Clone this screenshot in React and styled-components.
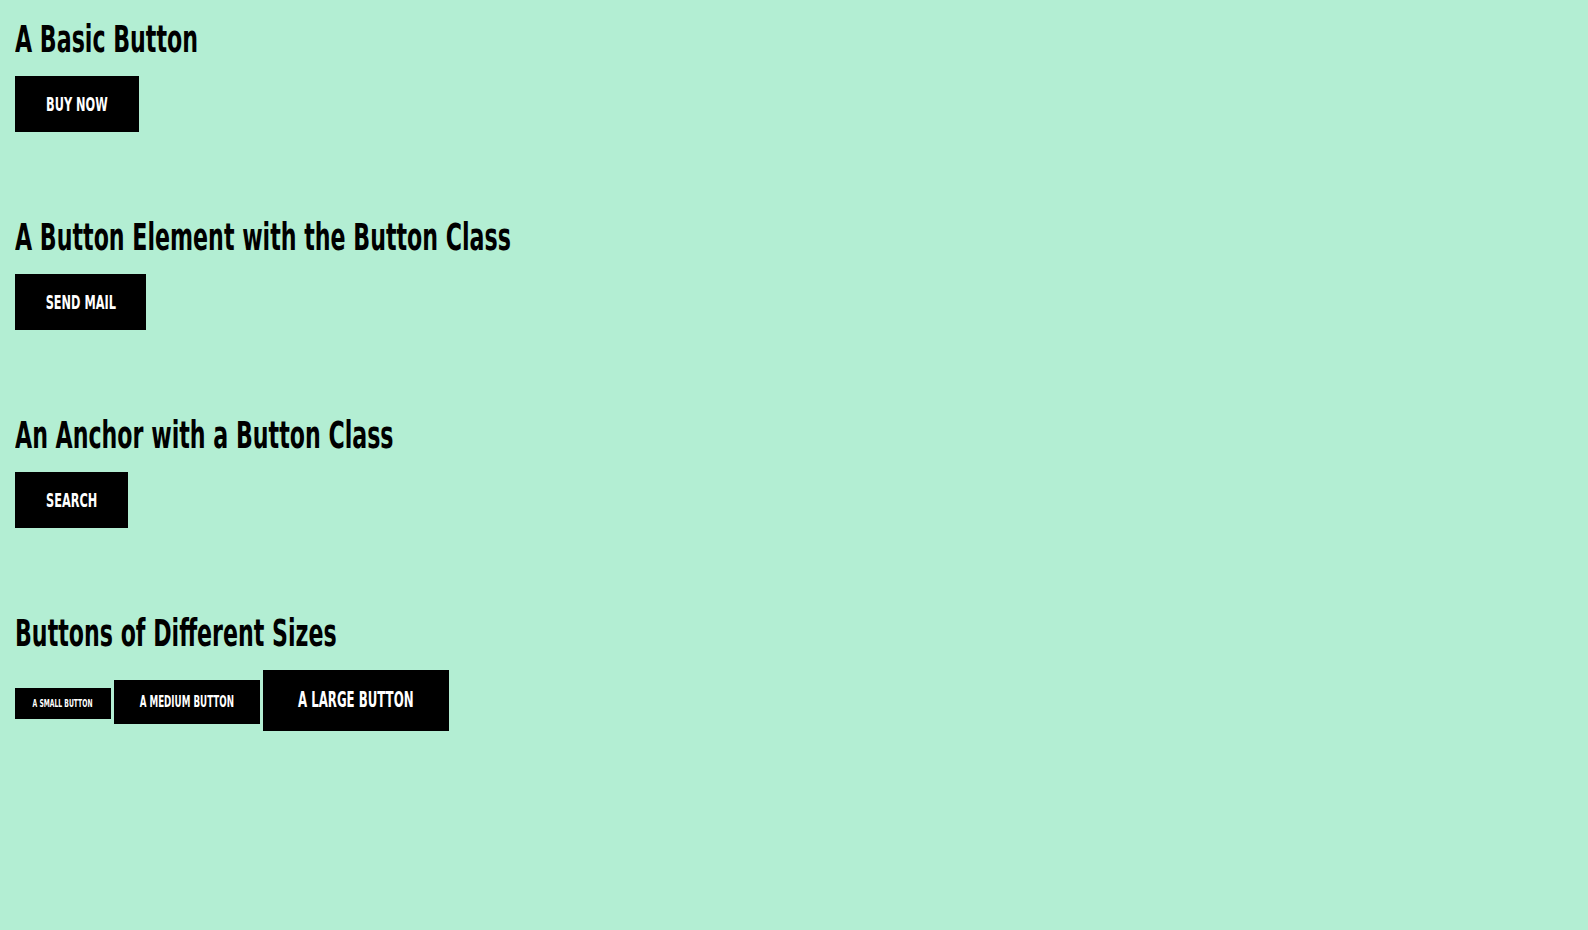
import React from 'react';
import styled, { createGlobalStyle } from 'styled-components';

const GlobalStyle = createGlobalStyle`
  html, body {
    margin: 0;
    padding: 0;
    background-color: #b3eed3;
  }
  body {
    font-family: 'DejaVu Sans Condensed', 'Liberation Sans', sans-serif;
  }
`;

const Page = styled.main`
  display: flex;
  flex-direction: column;
  gap: 86px;
  padding: 20px 15px 0;
  min-height: 930px;
  box-sizing: border-box;
`;

const Section = styled.section`
  display: flex;
  flex-direction: column;
  align-items: flex-start;
  gap: 16px;
`;

const Heading = styled.h2`
  margin: 0;
  font-size: 37px;
  line-height: 40px;
  font-weight: 700;
  color: #000;
  white-space: nowrap;
`;

// condensed face, the reference uses a tall narrow display font
const Narrow = styled.span`
  display: inline-block;
  transform: scaleX(${(p) => p.$k || 0.665});
  transform-origin: ${(p) => (p.$center ? 'center' : 'left')} center;
`;

const sizes = {
  regular: { font: 20, py: 18, lh: 20 },
  small: { font: 10.7, py: 10, lh: 11 },
  medium: { font: 15.4, py: 14, lh: 16 },
  large: { font: 20.8, py: 20, lh: 21 },
};

const Button = styled.button`
  display: inline-flex;
  justify-content: center;
  align-items: baseline;
  box-sizing: border-box;
  width: ${(p) => p.$width}px;
  border: none;
  margin: 0;
  cursor: pointer;
  background-color: #000;
  color: #fff;
  font-family: inherit;
  font-weight: 700;
  white-space: nowrap;
  text-transform: uppercase;
  text-decoration: none;
  font-size: ${(p) => sizes[p.$size].font}px;
  line-height: ${(p) => sizes[p.$size].lh}px;
  padding: ${(p) => sizes[p.$size].py}px 0;
`;

const ButtonRow = styled.div`
  display: flex;
  align-items: baseline;
  gap: 3px;
`;

function Btn({ size = 'regular', width, children, ...rest }) {
  return (
    <Button $size={size} $width={width} {...rest}>
      <Narrow $k={0.63} $center>{children}</Narrow>
    </Button>
  );
}

export default function App() {
  return (
    <>
      <GlobalStyle />
      <Page>
        <Section>
          <Heading><Narrow>A Basic Button</Narrow></Heading>
          <Btn width={124}>Buy Now</Btn>
        </Section>
        <Section>
          <Heading><Narrow>A Button Element with the Button Class</Narrow></Heading>
          <Btn width={131}>Send Mail</Btn>
        </Section>
        <Section>
          <Heading><Narrow>An Anchor with a Button Class</Narrow></Heading>
          <Btn as="a" href="#" width={113}>Search</Btn>
        </Section>
        <Section>
          <Heading><Narrow>Buttons of Different Sizes</Narrow></Heading>
          <ButtonRow>
            <Btn size="small" width={96}>A Small Button</Btn>
            <Btn size="medium" width={146}>A Medium Button</Btn>
            <Btn size="large" width={186}>A Large Button</Btn>
          </ButtonRow>
        </Section>
      </Page>
    </>
  );
}
